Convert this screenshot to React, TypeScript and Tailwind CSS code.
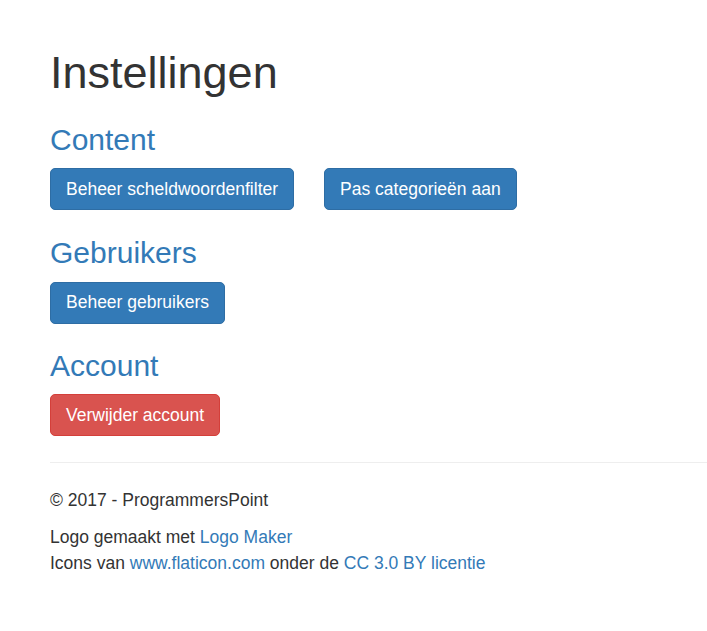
import React from "react";

export default function App() {
  return (
    <div
      className="min-h-[631px] bg-white pl-[50px] pt-[48px] text-[17.5px] leading-[25px] text-[#333]"
      style={{ fontFamily: '"Liberation Sans", Arial, Helvetica, sans-serif' }}
    >
      <h1 className="text-[45px] leading-[49.5px] font-normal text-[#333]">Instellingen</h1>

      <h3 className="mt-[25px] mb-[12.5px] text-[30px] leading-[33px] font-normal text-[#337ab7]">Content</h3>
      <div className="flex gap-[30px]">
        <button className="rounded-[5px] border border-[#2e6da4] bg-[#337ab7] px-[15px] py-[7.5px] text-[17.5px] leading-[25px] text-white">
          Beheer scheldwoordenfilter
        </button>
        <button className="rounded-[5px] border border-[#2e6da4] bg-[#337ab7] px-[15px] py-[7.5px] text-[17.5px] leading-[25px] text-white">
          Pas categorieën aan
        </button>
      </div>

      <h3 className="mt-[26px] mb-[12.5px] text-[30px] leading-[33px] font-normal text-[#337ab7]">Gebruikers</h3>
      <div className="flex">
        <button className="rounded-[5px] border border-[#2e6da4] bg-[#337ab7] px-[15px] py-[7.5px] text-[17.5px] leading-[25px] text-white">
          Beheer gebruikers
        </button>
      </div>

      <h3 className="mt-[25px] mb-[12.5px] text-[30px] leading-[33px] font-normal text-[#337ab7]">Account</h3>
      <div className="flex">
        <button className="rounded-[5px] border border-[#d43f3a] bg-[#d9534f] px-[15px] py-[7.5px] text-[17.5px] leading-[25px] text-white">
          Verwijder account
        </button>
      </div>

      <hr className="mt-[25.5px] mb-[25px] border-0 border-t border-[#eee]" />

      <footer>
        <p className="mb-[11px]">© 2017 - ProgrammersPoint</p>
        <p className="leading-[26px]">
          Logo gemaakt met <a className="text-[#337ab7]" href="#">Logo Maker</a>
          <br />
          Icons van <a className="text-[#337ab7]" href="#">www.flaticon.com</a> onder de{" "}
          <a className="text-[#337ab7]" href="#">CC 3.0 BY licentie</a>
        </p>
      </footer>
    </div>
  );
}
